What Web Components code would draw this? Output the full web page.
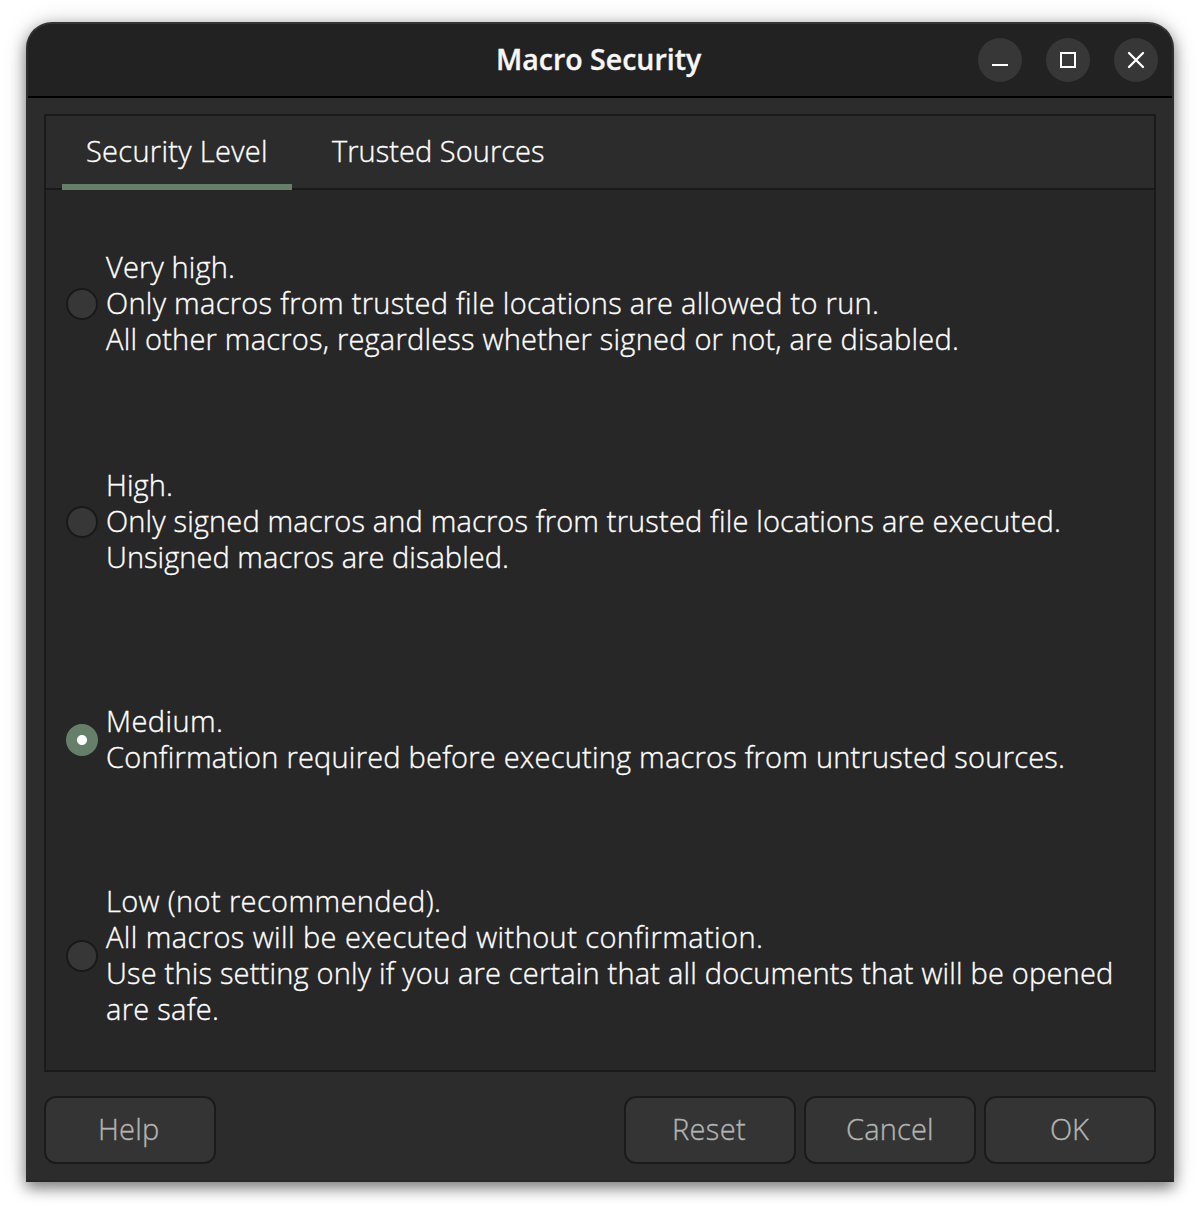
<!DOCTYPE html>
<html lang="en">
<head>
<meta charset="utf-8">
<title>Macro Security</title>
<style>
html,body{margin:0;background:#fff}
body{width:1200px;height:1214px;overflow:hidden;font:300 29px "Open Sans","Noto Sans",sans-serif;color:#fff;display:flex}
</style>
</head>
<body>
<dialog-window></dialog-window>
<script>
const ctx = document.createElement('canvas').getContext('2d');
const define = (name, html, init) => customElements.define(name, class extends HTMLElement {
  connectedCallback() {
    if (this.shadowRoot) return;
    const t = document.createElement('template');
    t.innerHTML = html;
    this.attachShadow({mode: 'open'}).append(t.content.cloneNode(true));
    if (init) init(this);
  }
});

// One line of text whose visible ink starts at `l` and spans `w` pixels.
define('text-line', `<style>:host{display:flow-root;white-space:pre;line-height:36px;height:36px;-webkit-text-stroke:.35px currentColor}span{display:block;margin-top:-1px}</style><span><slot></slot></span>`, el => {
  const s = getComputedStyle(el), txt = el.textContent;
  ctx.font = `${s.fontWeight} ${s.fontSize} ${s.fontFamily}`;
  const m = ctx.measureText(txt);
  const ink = m.actualBoundingBoxLeft + m.actualBoundingBoxRight;
  el.style.letterSpacing = ((+el.getAttribute('w') - ink) / (txt.length - 1)).toFixed(3) + 'px';
  el.style.marginLeft = ((+el.getAttribute('l') || 0) + m.actualBoundingBoxLeft).toFixed(2) + 'px';
});

define('window-button', `<style>:host{display:block;width:44px;height:44px;border-radius:50%;background:#373737}svg{display:block}</style><svg width="44" height="44" fill="none" stroke="#fff" stroke-width="2"><path/></svg>`, el => {
  const d = {min: 'M14 27H30', max: 'M15 15H29V29H15Z', close: 'M15 15L29 29M29 15L15 29'};
  const p = el.shadowRoot.querySelector('path');
  p.setAttribute('d', d[el.getAttribute('kind')]);
  if (el.getAttribute('kind') === 'close') { p.setAttribute('stroke-width', '2.3'); p.setAttribute('stroke-linecap', 'round'); }
});

define('title-bar', `<style>
:host{display:grid;grid-template-columns:1fr auto 1fr;align-items:center;height:72px;border-bottom:2px solid #000;background:#222;border-radius:24px 24px 0 0;padding:0 14px}
text-line{font-weight:600;font-size:28.5px;width:206px;color:#f7f7f7}
nav{display:flex;gap:24px;justify-content:flex-end}
</style><i></i><text-line w="204">Macro Security</text-line><nav><window-button kind="min"></window-button><window-button kind="max"></window-button><window-button kind="close"></window-button></nav>`);

define('tab-item', `<style>:host{display:block;box-sizing:border-box;height:74px;padding:18px 0 0 24px}:host([active]){border-bottom:6px solid #667f6b}</style><slot></slot>`);

define('radio-option', `<style>
:host{display:flex;align-items:center;gap:8px;height:218px}
i{box-sizing:border-box;flex:none;width:32px;height:32px;border-radius:50%;background:#373737;border:2px solid #191919}
:host([checked]) i{border:0;background:radial-gradient(circle,#fff 4.6px,#667f6b 5.4px)}
</style><i></i><div><slot></slot></div>`);

define('push-button', `<style>:host{display:block;box-sizing:border-box;width:172px;height:68px;border:2px solid #1b1b1b;border-radius:12px;background:#343434;color:#b3b3b3;padding-top:14px}</style><slot></slot>`);

define('note-book', `<style>
:host{display:flex;flex-direction:column;box-sizing:border-box;height:958px;border:2px solid #1a1a1a;background:#272727}
header{display:flex;gap:16px;height:74px;padding-left:16px;background:linear-gradient(#2c2c2c 72px,#1a1a1a 72px)}
main{padding:5px 20px 0}
</style><header>
<tab-item active style="width:230px"><text-line l="1" w="178">Security Level</text-line></tab-item>
<tab-item><text-line l="0" w="212">Trusted Sources</text-line></tab-item>
</header><main>
<radio-option><text-line l="0" w="127">Very high.</text-line><text-line l="1" w="770">Only macros from trusted file locations are allowed to run.</text-line><text-line l="0" w="851">All other macros, regardless whether signed or not, are disabled.</text-line></radio-option>
<radio-option><text-line l="2" w="63">High.</text-line><text-line l="1" w="952">Only signed macros and macros from trusted file locations are executed.</text-line><text-line l="2" w="399">Unsigned macros are disabled.</text-line></radio-option>
<radio-option checked><text-line l="2" w="113">Medium.</text-line><text-line l="1" w="956">Confirmation required before executing macros from untrusted sources.</text-line></radio-option>
<radio-option style="height:214px"><text-line l="2" w="331">Low (not recommended).</text-line><text-line l="0" w="655">All macros will be executed without confirmation.</text-line><text-line l="2" w="1003">Use this setting only if you are certain that all documents that will be opened</text-line><text-line l="1" w="110">are safe.</text-line></radio-option>
</main>`);

define('dialog-window', `<style>
:host{display:flex;flex-direction:column;box-sizing:border-box;width:1148px;height:1160px;margin:22px 0 0 26px;border:2px solid;border-color:#353535 #2e2e2e #272727;border-radius:26px 26px 0 0;background:#2c2c2c;box-shadow:0 6px 14px rgba(0,0,0,.42),0 2px 22px rgba(0,0,0,.22)}
section{padding:16px 16px 0}
footer{display:flex;gap:8px;padding:24px 16px 0}
.gap{flex:1}
</style><title-bar></title-bar><section><note-book></note-book></section>
<footer><push-button><text-line l="54" w="58">Help</text-line></push-button><span class="gap"></span><push-button><text-line l="48" w="71">Reset</text-line></push-button><push-button><text-line l="41" w="84">Cancel</text-line></push-button><push-button><text-line l="65" w="38">OK</text-line></push-button></footer>`);
</script>
</body>
</html>
